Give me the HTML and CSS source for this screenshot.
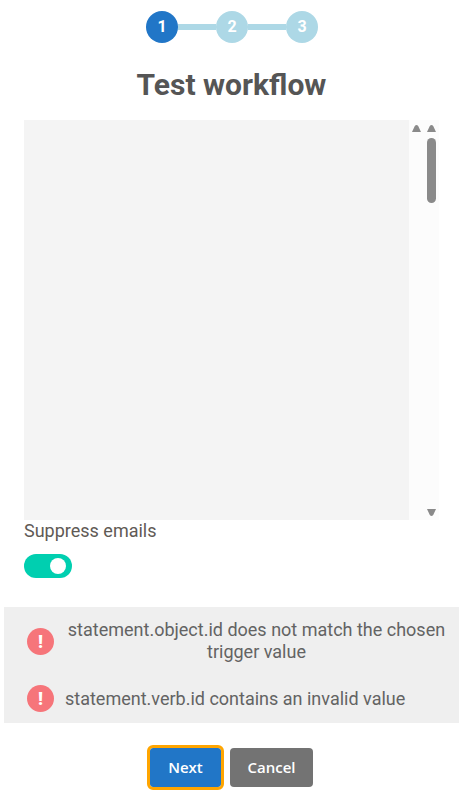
FILE: index.html
```html
<!DOCTYPE html>
<html lang="en">
<head>
    <meta charset="UTF-8">
    <meta name="viewport" content="width=device-width, initial-scale=1.0">
    <title>Test workflow</title>
    <link rel="stylesheet" href="styles.css">
</head>
<body>
    <div class="steps">
        <div class="step step-active">1</div>
        <div class="step-line"></div>
        <div class="step">2</div>
        <div class="step-line"></div>
        <div class="step">3</div>
    </div>

    <h1 class="title">Test workflow</h1>

    <div class="preview">
        <div class="preview-body"></div>
        <div class="scroll-outer">
            <div class="scroll-inner">
                <svg class="arrow" viewBox="0 0 9 7"><path d="M0 7 L2.8 1 Q4.5 -1 6.2 1 L9 7 Z"/></svg>
                <svg class="arrow" viewBox="0 0 9 7"><path d="M0 7 L2.8 1 Q4.5 -1 6.2 1 L9 7 Z"/></svg>
            </div>
            <div class="scroll-thumb"></div>
            <svg class="arrow arrow-down" viewBox="0 0 9 7"><path d="M0 0 L2.8 6 Q4.5 8 6.2 6 L9 0 Z"/></svg>
        </div>
    </div>

    <div class="field">
        <div class="field-label">Suppress emails</div>
        <div class="toggle"><span class="toggle-knob"></span></div>
    </div>

    <div class="errors">
        <div class="error error-first">
            <div class="error-icon">!</div>
            <div class="error-text">statement.object.id does not match the chosen trigger value</div>
        </div>
        <div class="error">
            <div class="error-icon">!</div>
            <div class="error-text">statement.verb.id contains an invalid value</div>
        </div>
    </div>

    <div class="actions">
        <button class="btn btn-primary">Next</button>
        <button class="btn btn-secondary">Cancel</button>
    </div>
</body>
</html>
```

FILE: styles.css
```css
body {
    margin: 0;
    height: 793px;
    overflow: hidden;
    background-color: #fff;
    color: #5a5a5a;
    font-family: Roboto, "Liberation Sans", sans-serif;
}

/* stepper */
.steps {
    display: flex;
    justify-content: center;
    align-items: center;
    width: 464px;
    padding-top: 11px;
}

.step {
    width: 32px;
    height: 32px;
    border-radius: 50%;
    background-color: #add8e6;
    color: #fff;
    font-size: 16px;
    font-weight: 700;
    line-height: 32px;
    text-align: center;
}

.step-active {
    background-color: #2176c7;
}

.step-line {
    width: 38px;
    height: 6px;
    background-color: #add8e6;
}

.title {
    width: 463px;
    margin: 24px 0 17px;
    color: #555;
    font-size: 30px;
    font-weight: 700;
    line-height: 36px;
    text-align: center;
}

/* fake scroll area */
.preview {
    display: flex;
    height: 400px;
    margin-left: 24px;
}

.preview-body {
    width: 385px;
    background-color: #f4f4f4;
}

.scroll-outer {
    display: flex;
    flex-direction: column;
    width: 30px;
    background-color: #fcfcfc;
}

.scroll-inner {
    display: flex;
    gap: 6px;
    padding: 5px 0 0 3px;
}

.arrow {
    display: block;
    width: 9px;
    height: 7px;
    fill: #8a8a8a;
}

.arrow-down {
    margin: 306px 0 0 18px;
}

.scroll-thumb {
    width: 9px;
    height: 65px;
    margin: 6px 0 0 18px;
    border-radius: 5px;
    background-color: #8a8a8a;
}

.field {
    margin-left: 24px;
}

.field-label {
    color: #5f5a55;
    font-size: 18px;
    line-height: 21px;
}

.toggle {
    display: flex;
    justify-content: flex-end;
    align-items: center;
    width: 48px;
    height: 24px;
    margin-top: 13px;
    border-radius: 12px;
    background-color: #00cfb0;
}

.toggle-knob {
    width: 16px;
    height: 16px;
    margin-right: 6px;
    border-radius: 50%;
    background-color: #fff;
}

/* error list */
.errors {
    box-sizing: border-box;
    width: 455px;
    height: 116px;
    margin: 29px 0 0 4px;
    padding: 12px 11px 0 23px;
    background-color: #efefef;
}

.error {
    display: flex;
    align-items: center;
}

.error-first {
    margin-bottom: 22px;
}

.error-first .error-text {
    line-height: 22px;
}

.error-icon {
    flex-shrink: 0;
    width: 27px;
    height: 27px;
    margin-right: 11px;
    border-radius: 50%;
    background-color: #f6757a;
    color: #fff;
    font-size: 18px;
    font-weight: 900;
    line-height: 27px;
    text-align: center;
}

.error-text {
    color: #636363;
    font-size: 18px;
    line-height: 27px;
    text-align: center;
}

/* buttons */
.actions {
    display: flex;
    justify-content: center;
    align-items: center;
    gap: 9px;
    width: 463px;
    margin-top: 25px;
}

.btn {
    padding: 0 0 2px;
    border: 0;
    border-radius: 4px;
    color: #fff;
    font-family: "Open Sans", "Noto Sans", sans-serif;
    font-size: 15px;
    font-weight: 600;
}

.btn-primary {
    width: 71px;
    height: 39px;
    border-radius: 3px;
    outline: 3px solid #ffa500;
    background-color: #2176c7;
}

.btn-secondary {
    width: 83px;
    height: 39px;
    background-color: #737373;
}
```
